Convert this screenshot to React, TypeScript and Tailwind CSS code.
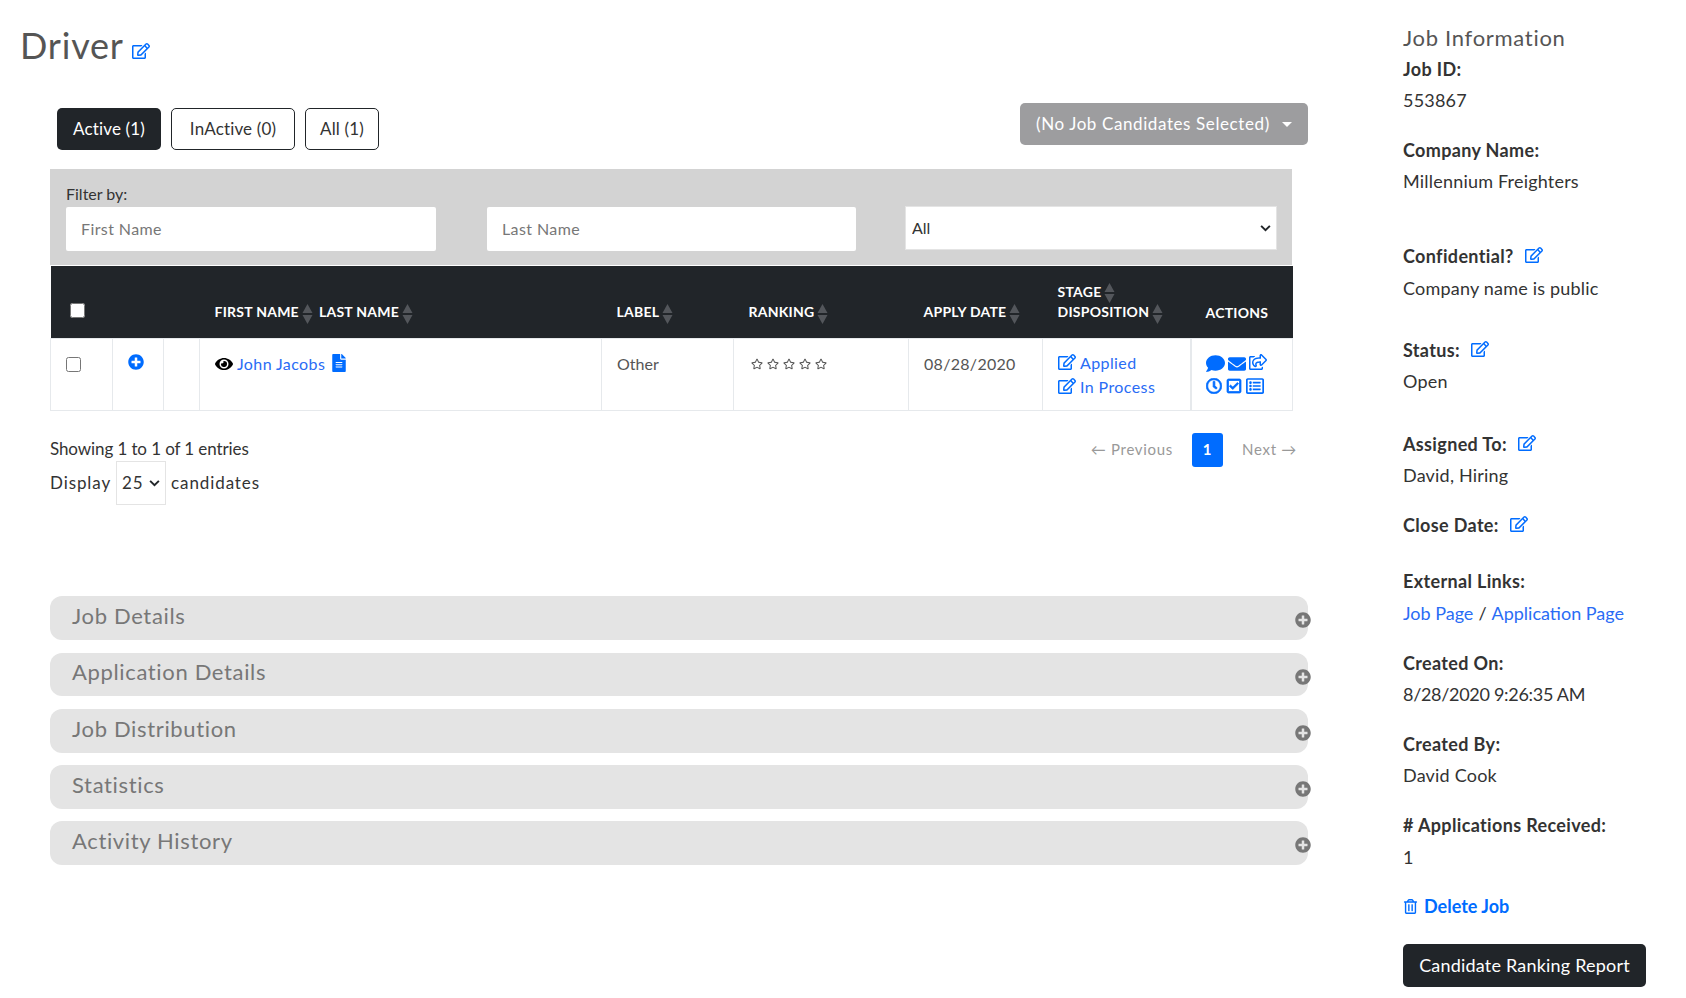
import React from "react";
import {
  FaRegEdit, FaPlusCircle, FaEye, FaFileAlt, FaComment, FaEnvelope, FaRegShareSquare,
  FaRegClock, FaRegCheckSquare, FaRegListAlt, FaRegTrashAlt, FaRegStar,
} from "react-icons/fa";

const font = { fontFamily: '"Lato", "Liberation Sans", sans-serif' };

function Sort() {
  return (
    <svg viewBox="0 0 11 20" className="inline-block w-[11px] h-[20px] ml-[3px] align-middle" fill="#53565b">
      <path d="M5.5 0 L10.5 9 L0.5 9 Z" />
      <path d="M5.5 20 L10.5 11 L0.5 11 Z" />
    </svg>
  );
}

function Chevron({ cls }: { cls: string }) {
  return (
    <svg viewBox="0 0 12 8" className={`absolute pointer-events-none w-[11px] h-[7px] ${cls}`} fill="none" stroke="#212529" strokeWidth="2.2">
      <path d="M1 1 L6 6 L11 1" />
    </svg>
  );
}

function Line({ children, cls = "" }: { children: React.ReactNode; cls?: string }) {
  return <div className={`h-[31px] flex items-center text-[18px] tracking-[0.2px] text-[#333] ${cls}`}>{children}</div>;
}

function Label({ text, edit, cls = "" }: { text: string; edit?: boolean; cls?: string }) {
  return (
    <Line cls={`font-bold !tracking-[0.35px] ${cls}`}>
      <span>{text}</span>
      {edit && <FaRegEdit className="ml-[11px] text-[#006cff] text-[18px] mb-[3px]" />}
    </Line>
  );
}

function Accordion({ title, cls }: { title: string; cls: string }) {
  return (
    <div className={`relative rounded-[12px] bg-[#e4e4e4] pl-[22px] pb-[5px] flex items-center text-[22px] text-[#777] tracking-[0.65px] ${cls}`}>
      {title}
      <FaPlusCircle className="absolute right-[-3px] top-[16px] text-[16px] text-[#777]" />
    </div>
  );
}

export default function App() {
  const th = "px-[15px] pb-[14px] align-bottom text-left text-[14px] font-bold leading-[22px] tracking-[0.25px] uppercase text-white whitespace-nowrap";
  const td = "px-[15px] pt-[14px] align-top border border-[#e6e9ec] text-[16px] leading-[22px] text-[#555]";
  return (
    <div className="flex w-[1686px] h-[998px] overflow-hidden bg-white" style={font}>
      <main className="w-[1403px] shrink-0">
        <div className="pt-[22px] pl-[20px] flex items-end h-[68px]">
          <h1 className="text-[36px] leading-[44px] text-[#555] tracking-[0.8px] mb-[1px]">Driver</h1>
          <FaRegEdit className="ml-[8px] mb-[8px] text-[18px] text-[#006cff]" />
        </div>

        <div className="mt-[35px] ml-[57px] w-[1251px] flex justify-between items-start">
          <div className="mt-[5px] flex gap-[10px] text-[17px] tracking-[0.15px]">
            <button className="h-[42px] w-[104px] rounded-[5px] bg-[#212529] text-white">Active (1)</button>
            <button className="h-[42px] w-[124px] rounded-[5px] border border-[#212529] text-[#333]">InActive (0)</button>
            <button className="h-[42px] w-[74px] rounded-[5px] border border-[#212529] text-[#333]">All (1)</button>
          </div>
          <button className="h-[42px] w-[288px] rounded-[5px] bg-[#9d9d9f] text-white text-[17px] tracking-[0.6px] flex items-center pl-[16px]">
            (No Job Candidates Selected)
            <span className="ml-[12px] w-0 h-0 border-x-[5px] border-x-transparent border-t-[5px] border-t-white" />
          </button>
        </div>

        <div className="mt-[19px] ml-[50px] w-[1242px] h-[97px] bg-[#d3d3d3] border-b border-white pl-[16px] pr-[15px] pt-[14px]">
          <div className="text-[16px] leading-[22px] text-[#333]">Filter by:</div>
          <div className="flex mt-[2px] items-start">
            <input placeholder="First Name" className="w-[370px] h-[44px] bg-white rounded-[2px] pl-[15px] pb-[2px] text-[16px] tracking-[0.4px] placeholder:text-[#777] outline-none" />
            <input placeholder="Last Name" className="ml-[51px] w-[369px] h-[44px] bg-white rounded-[2px] pl-[15px] pb-[2px] text-[16px] tracking-[0.4px] placeholder:text-[#777] outline-none" />
            <div className="relative ml-[49px] -mt-[1px]">
              <select defaultValue="All" className="appearance-none block w-[372px] h-[44px] bg-white border border-[#e4e4e4] pl-[6px] text-[16px] text-[#333]">
                <option>All</option>
              </select>
              <Chevron cls="right-[6px] top-[19px]" />
            </div>
          </div>
        </div>

        <table className="ml-[50px] w-[1242px] table-fixed border-collapse">
          <colgroup>
            <col className="w-[62px]" />
            <col className="w-[51px]" />
            <col className="w-[36px]" />
            <col className="w-[402px]" />
            <col className="w-[132px]" />
            <col className="w-[175px]" />
            <col className="w-[134px]" />
            <col className="w-[148px]" />
            <col className="w-[102px]" />
          </colgroup>
          <thead>
            <tr className="bg-[#212529] h-[72px]">
              <th className="pl-[19px] pb-[20px] align-bottom text-left">
                <input type="checkbox" className="block w-[15px] h-[15px]" />
              </th>
              <th />
              <th />
              <th className={th}>
                First Name<Sort /><span className="ml-[6px]">Last Name</span><Sort />
              </th>
              <th className={th}>Label<Sort /></th>
              <th className={th}>Ranking<Sort /></th>
              <th className={th}>Apply Date<Sort /></th>
              <th className={th}>
                <div className="-mb-[2px]">Stage<Sort /></div>
                <div>Disposition<Sort /></div>
              </th>
              <th className={th + " !px-[15px]"}>Actions</th>
            </tr>
          </thead>
          <tbody>
            <tr className="h-[72px]">
              <td className="border border-[#e6e9ec] pl-[15px] pt-[18px] align-top">
                <input type="checkbox" className="block w-[15px] h-[15px]" />
              </td>
              <td className="border border-[#e6e9ec] pl-[15px] pt-[15px] align-top">
                <FaPlusCircle className="text-[16px] text-[#006cff]" />
              </td>
              <td className="border border-[#e6e9ec]" />
              <td className={td}>
                <span className="flex items-center">
                  <FaEye className="text-[18px] text-black mr-[4px]" />
                  <a className="text-[#2a6cf5] tracking-[0.4px]">John Jacobs</a>
                  <FaFileAlt className="ml-[5px] text-[18px] text-[#006cff] mb-[2px]" />
                </span>
              </td>
              <td className={td}>Other</td>
              <td className={td}>
                <span className="flex gap-[4px] pl-[2px] pt-[5px] text-[12px] text-[#555]">
                  <FaRegStar /><FaRegStar /><FaRegStar /><FaRegStar /><FaRegStar />
                </span>
              </td>
              <td className={td + " tracking-[0.3px]"}>08/28/2020</td>
              <td className={td + " !pt-[13px]"}>
                <div className="flex items-center text-[#2a6cf5] tracking-[0.4px]">
                  <FaRegEdit className="text-[18px] text-[#006cff] mr-[4px] mb-[2px]" />Applied
                </div>
                <div className="flex items-center text-[#2a6cf5] tracking-[0.4px] mt-[2px]">
                  <FaRegEdit className="text-[18px] text-[#006cff] mr-[4px] mb-[2px]" />In Process
                </div>
              </td>
              <td className="border border-[#e6e9ec] border-l-2 pl-[14px] pt-[15px] align-top text-[#006cff]">
                <div className="flex items-center h-[20px] gap-[3px]">
                  <FaComment className="text-[19px]" />
                  <FaEnvelope className="text-[18px]" />
                  <FaRegShareSquare className="text-[18px] mb-[3px]" />
                </div>
                <div className="flex items-center h-[20px] gap-[4px] mt-[2px]">
                  <FaRegClock className="text-[16px]" stroke="currentColor" strokeWidth={24} />
                  <FaRegCheckSquare className="text-[16px]" stroke="currentColor" strokeWidth={24} />
                  <FaRegListAlt className="text-[18px]" />
                </div>
              </td>
            </tr>
          </tbody>
        </table>

        <div className="ml-[50px] w-[1247px] flex justify-between items-start mt-[21px]">
          <div className="text-[17px] text-[#333]">
            <div className="h-[36px] flex items-center pt-[1px] -mt-[1px] tracking-[-0.1px]">Showing 1 to 1 of 1 entries</div>
            <div className="flex items-center -mt-[6px] tracking-[0.9px]">
              Display
              <div className="relative mx-[5px]">
                <select defaultValue="25" className="appearance-none block w-[50px] h-[44px] border border-[#e4e4e4] bg-white pl-[5px] text-[17px]">
                  <option>25</option>
                </select>
                <Chevron cls="right-[6px] top-[19px]" />
              </div>
              candidates
            </div>
          </div>
          <div className="flex items-center text-[15px] text-[#999] tracking-[0.7px] mt-[1px]">
            <span>← Previous</span>
            <span className="ml-[19px] w-[31px] h-[34px] rounded-[3px] bg-[#006cff] text-white font-bold flex items-center justify-center">1</span>
            <span className="ml-[19px]">Next →</span>
          </div>
        </div>

        <div className="mt-[91px] ml-[50px] w-[1258px] flex flex-col">
          <Accordion title="Job Details" cls="h-[44px]" />
          <Accordion title="Application Details" cls="h-[43px] mt-[13px]" />
          <Accordion title="Job Distribution" cls="h-[44px] mt-[13px]" />
          <Accordion title="Statistics" cls="h-[44px] mt-[12px]" />
          <Accordion title="Activity History" cls="h-[44px] mt-[12px]" />
        </div>
      </main>

      <aside className="w-[283px] pt-[22px]">
        <h2 className="text-[22px] leading-[31px] mb-[1px] text-[#555] tracking-[0.7px]">Job Information</h2>
        <Label text="Job ID:" />
        <Line>553867</Line>
        <Label text="Company Name:" cls="mt-[19px]" />
        <Line>Millennium Freighters</Line>
        <Label text="Confidential?" edit cls="mt-[44px]" />
        <Line cls="mt-[1px]">Company name is public</Line>
        <Label text="Status:" edit cls="mt-[31px]" />
        <Line>Open</Line>
        <Label text="Assigned To:" edit cls="mt-[32px]" />
        <Line>David, Hiring</Line>
        <Label text="Close Date:" edit cls="mt-[19px]" />
        <Label text="External Links:" cls="mt-[25px]" />
        <Line cls="mt-[1px] !tracking-[0px]">
          <a className="text-[#2a6cf5]">Job Page</a>
          <span className="mx-[5px]">/</span>
          <a className="text-[#2a6cf5]">Application Page</a>
        </Line>
        <Label text="Created On:" cls="mt-[19px]" />
        <Line cls="!tracking-[-0.3px]">8/28/2020 9:26:35 AM</Line>
        <Label text="Created By:" cls="mt-[19px]" />
        <Line>David Cook</Line>
        <Label text="# Applications Received:" cls="mt-[19px]" />
        <Line cls="mt-[1px]">1</Line>
        <Line cls="mt-[18px] font-bold !text-[#006cff] !tracking-[0px]">
          <FaRegTrashAlt className="mr-[6px] text-[15px]" />Delete Job
        </Line>
        <button className="mt-[22px] h-[43px] w-[243px] rounded-[5px] bg-[#212529] text-white text-[18px] tracking-[0.2px]">Candidate Ranking Report</button>
      </aside>
    </div>
  );
}
